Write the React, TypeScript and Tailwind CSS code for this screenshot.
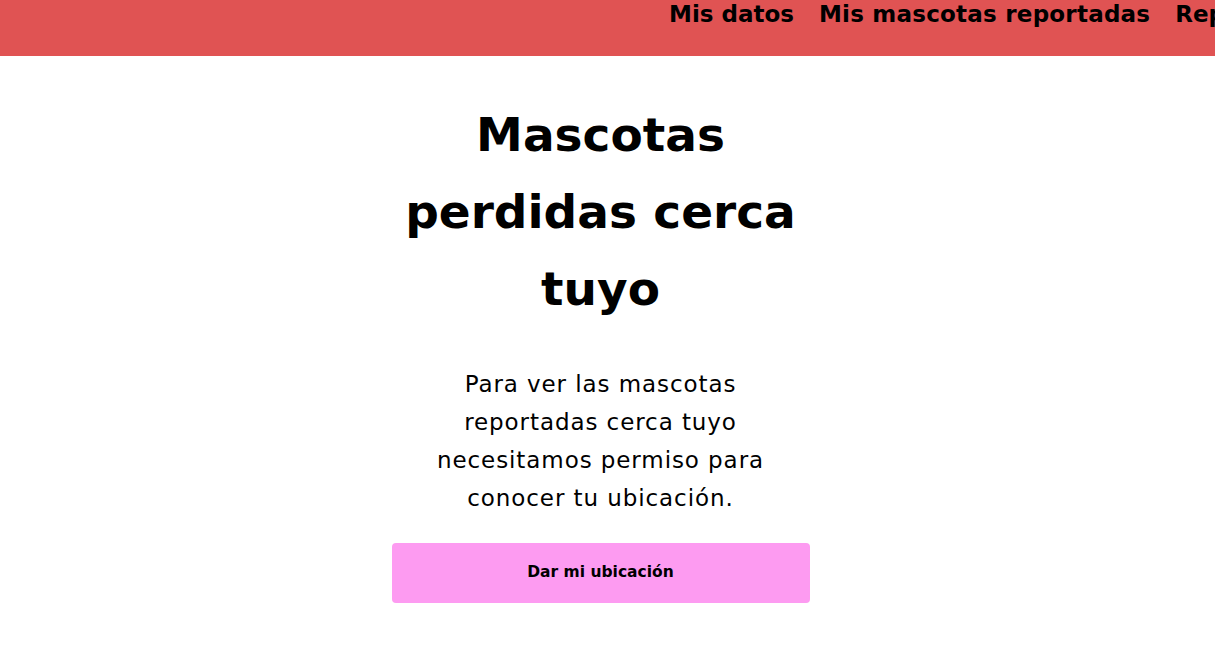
export default function App(): React.ReactElement {
  return (
    <div className="min-h-screen bg-white text-black font-['DejaVu_Sans',sans-serif]">
      {/* Header */}
      <header className="h-14 overflow-hidden bg-[#e05353]">
        <nav className="ml-[669px] flex gap-[25px] whitespace-nowrap text-[23px] font-bold leading-[28px]">
          <a href="#">Mis datos</a>
          <a href="#" className="tracking-[0.01em]">Mis mascotas reportadas</a>
          <a href="#">Reportar mascota</a>
        </nav>
      </header>

      {/* Main */}
      <main className="flex flex-col items-center pr-[14px]">
        <div className="mt-[40px] flex w-[418px] flex-col items-center">
          <h1 className="text-center text-[47px] font-bold leading-[77px]">
            Mascotas
            <br />
            perdidas cerca
            <br />
            tuyo
          </h1>
          <p className="mt-[38px] text-center text-[23px] leading-[38px] tracking-[0.04em]">
            Para ver las mascotas
            <br />
            reportadas cerca tuyo
            <br />
            necesitamos permiso para
            <br />
            conocer tu ubicación.
          </p>
          <button className="mt-[26px] h-[60px] w-full rounded bg-[#fd9bf1] text-[15.5px] font-bold">
            Dar mi ubicación
          </button>
        </div>
      </main>
    </div>
  );
}
